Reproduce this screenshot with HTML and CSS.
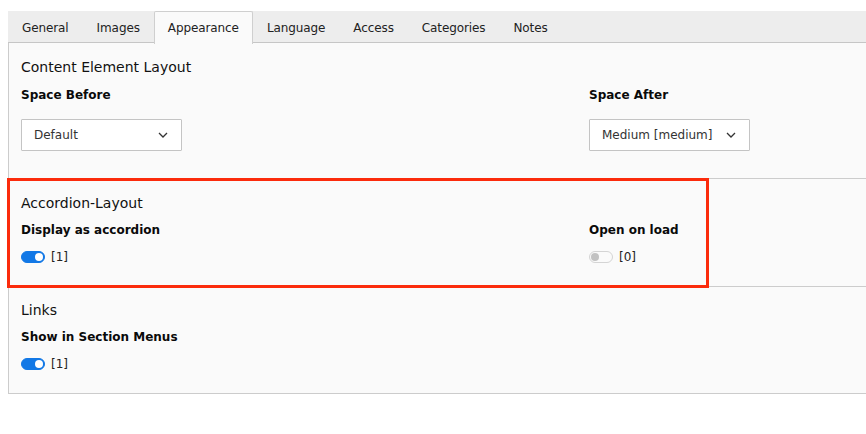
FILE: index.html
```html
<!DOCTYPE html>
<html lang="en">
<head>
<meta charset="utf-8">
<title>Appearance</title>
<link rel="stylesheet" href="styles.css">
</head>
<body>
<div class="editor">
  <ul class="tabs">
    <li class="tab">General</li>
    <li class="tab">Images</li>
    <li class="tab active">Appearance</li>
    <li class="tab">Language</li>
    <li class="tab">Access</li>
    <li class="tab">Categories</li>
    <li class="tab">Notes</li>
  </ul>
  <div class="panel">
    <section class="group">
      <h2 class="group-title">Content Element Layout</h2>
      <div class="row row-selects">
        <div class="field">
          <div class="label">Space Before</div>
          <div class="select">
            <span>Default</span>
            <svg class="chev" width="10" height="6" viewBox="0 0 10 6"><path d="M1 1 L5 5 L9 1" fill="none" stroke="#333" stroke-width="1.3"/></svg>
          </div>
        </div>
        <div class="field">
          <div class="label">Space After</div>
          <div class="select">
            <span>Medium [medium]</span>
            <svg class="chev" width="10" height="6" viewBox="0 0 10 6"><path d="M1 1 L5 5 L9 1" fill="none" stroke="#333" stroke-width="1.3"/></svg>
          </div>
        </div>
      </div>
    </section>
    <section class="group highlighted">
      <h2 class="group-title">Accordion-Layout</h2>
      <div class="row">
        <div class="field">
          <div class="label">Display as accordion</div>
          <div class="control"><span class="toggle on"></span><span class="val">[1]</span></div>
        </div>
        <div class="field">
          <div class="label">Open on load</div>
          <div class="control"><span class="toggle"></span><span class="val">[0]</span></div>
        </div>
      </div>
      <div class="mark"></div>
    </section>
    <section class="group last">
      <h2 class="group-title">Links</h2>
      <div class="row">
        <div class="field">
          <div class="label">Show in Section Menus</div>
          <div class="control"><span class="toggle on"></span><span class="val">[1]</span></div>
        </div>
      </div>
    </section>
  </div>
</div>
</body>
</html>
```

FILE: styles.css
```css
html, body {
  margin: 0;
  padding: 0;
  background: #ffffff;
  overflow: hidden;
}
body {
  font-family: "DejaVu Sans", Verdana, sans-serif;
  font-size: 12px;
  color: #1a1a1a;
}
.editor {
  margin: 11px 0 0 8px;
}
.tabs {
  list-style: none;
  margin: 0;
  padding: 0;
  display: flex;
  background: #ededed;
  border-bottom: 1px solid #c6c6c6;
  height: 31px;
}
.tab {
  padding: 1px 13px 0;
  border: 1px solid transparent;
  border-bottom: none;
  line-height: 31px;
  color: #222;
  white-space: nowrap;
  letter-spacing: -0.1px;
}
.tab.active {
  background: #fafafa;
  border-color: #cfcfcf;
  border-radius: 2px 2px 0 0;
  height: 31px;
  line-height: 30px;
  margin-bottom: -1px;
}
.panel {
  background: #fafafa;
  border-left: 1px solid #cccccc;
  border-bottom: 1px solid #cccccc;
}
.group {
  position: relative;
  padding: 14px 12px 20px 12px;
  border-top: 1px solid #cccccc;
}
.group:first-child {
  border-top: none;
  padding-top: 14px;
  padding-bottom: 27px;
}
.group.last {
  padding-top: 13px;
  padding-bottom: 20px;
}
.group-title {
  margin: 0;
  font-size: 14px;
  font-weight: normal;
  line-height: 20px;
  color: #111;
}
.row {
  display: grid;
  grid-template-columns: 568px 1fr;
  margin-top: 9px;
}
.row-selects {
  margin-top: 10px;
}
.label {
  font-weight: bold;
  line-height: 16px;
  color: #0a0a0a;
}
.select {
  box-sizing: border-box;
  width: 161px;
  height: 32px;
  margin-top: 16px;
  background: #ffffff;
  border: 1px solid #c4c4c4;
  border-radius: 1px;
  display: flex;
  align-items: center;
  justify-content: space-between;
  padding: 0 13px 0 12px;
  color: #333;
}
.chev {
  display: block;
}
.control {
  display: flex;
  align-items: center;
  gap: 6px;
  height: 18px;
  margin-top: 10px;
  color: #222;
}
.toggle {
  position: relative;
  box-sizing: border-box;
  width: 24px;
  height: 12px;
  border-radius: 6px;
  border: 1px solid #d4d4d4;
  background: #fafafa;
  display: inline-block;
}
.toggle::after {
  content: "";
  position: absolute;
  top: 1px;
  left: 1px;
  width: 8px;
  height: 8px;
  border-radius: 50%;
  background: #c2c2c2;
}
.toggle.on {
  background: #1278e6;
  border-color: #1278e6;
}
.toggle.on::after {
  left: auto;
  right: 1px;
  background: #ffffff;
}
.mark {
  position: absolute;
  top: -1px;
  bottom: -2px;
  left: -2px;
  width: 702px;
  box-sizing: border-box;
  border: 3px solid #fb2b0c;
  pointer-events: none;
  z-index: 1;
}
```
